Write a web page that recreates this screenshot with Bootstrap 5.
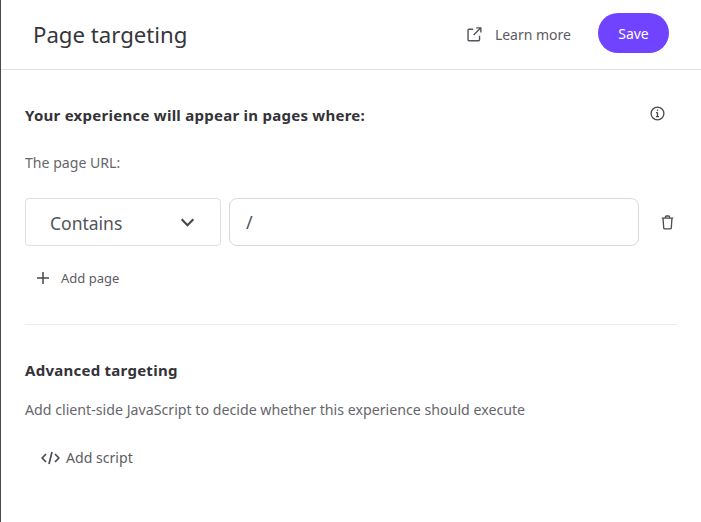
<!doctype html>
<html lang="en">
<head>
<meta charset="utf-8">
<title>Page targeting</title>
<link href="https://cdn.jsdelivr.net/npm/bootstrap@5.3.0/dist/css/bootstrap.min.css" rel="stylesheet">
<style>
html,body{height:100%;overflow:hidden}
body{font-family:"Noto Sans","Open Sans",sans-serif;color:#5a5a60;background:#fff}
.shell{height:522px;border-left:1px solid #4a4a4a}
.top{height:70px;border-bottom:1px solid #e2e2e2;padding:0 32px 0 32px}
.title{font-size:22.2px;color:#36363c;font-weight:400;margin:0;line-height:32px}
.learn{font-size:14px;color:#5c5c62;gap:13px;margin-right:27px;text-decoration:none}
.save{background:#6f43ff;color:#fff;border:0;width:71px;height:40px;border-radius:20px;font-size:14px;padding:0;margin-top:-3px}
.main{padding:0 24px}
.head1{font-size:15px;font-weight:700;color:#333338;line-height:20px;margin:0;letter-spacing:.26px}
.info-row{padding-top:35px;padding-right:12px}
.lbl{font-size:14.1px;color:#66666c;line-height:20px;margin:28px 0 0}
.cond{margin-top:25px;gap:8px}
.chooser{width:196px;height:48px;border:1px solid #e0e0e0;border-radius:4px;padding:1px 25px 0 24px;font-size:17.5px;color:#53535c}
.chooser span{padding-top:1px}
.urlbox{width:410px;height:48px;border:1px solid #d9d9d9;border-radius:8px;padding:1px 16px 0;font-size:18px;color:#53535c}
.bin{margin-left:14px}
.adder{font-size:13px;color:#5c5c62;margin:22px 0 0 12px;line-height:20px}
.rule{border-top:1px solid #ececec;margin:36px 0 0}
.head2{margin-top:35px}
.desc{font-size:14.2px;color:#66666c;line-height:20px;margin:20px 0 0}
.scripter{font-size:14.1px;color:#5c5c62;margin:28px 0 0 16px;line-height:20px;gap:6px}
</style>
</head>
<body>
<div class="shell">
  <header class="top d-flex align-items-center justify-content-between">
    <h1 class="title">Page targeting</h1>
    <div class="d-flex align-items-center">
      <a class="learn d-flex align-items-center" href="#">
        <svg width="15" height="15" viewBox="0 0 17 17" fill="none" stroke="#55555b" stroke-width="1.6"><path d="M7 2.5H2.2a1 1 0 0 0-1 1v11a1 1 0 0 0 1 1h11a1 1 0 0 0 1-1V10"/><path d="M10.5 1h5.2v5.2M15.5 1.2 7.5 9.2"/></svg>
        <span>Learn more</span>
      </a>
      <button class="save" type="button">Save</button>
    </div>
  </header>
  <main class="main">
    <div class="info-row d-flex justify-content-between align-items-center">
      <p class="head1">Your experience will appear in pages where:</p>
      <svg class="mb-1" width="15" height="15" viewBox="0 0 15 15" fill="none" stroke="#47474d" stroke-width="1.3"><circle cx="7.5" cy="7.5" r="6.4"/><path d="M7.5 6.5v4M6 6.6h1.5M6 10.6h3"/><circle cx="7.5" cy="4.2" r=".5" fill="#47474d" stroke-width=".6"/></svg>
    </div>
    <p class="lbl">The page URL:</p>
    <div class="cond d-flex align-items-center">
      <div class="chooser d-flex align-items-center justify-content-between flex-shrink-0">
        <span>Contains</span>
        <svg width="15" height="9" viewBox="0 0 16 10" fill="none" stroke="#45454b" stroke-width="2.3"><path d="M1.5 1.5 8 8l6.5-6.5"/></svg>
      </div>
      <div class="urlbox d-flex align-items-center flex-shrink-0">/</div>
      <svg class="bin flex-shrink-0" width="13" height="15" viewBox="0 0 14 16" fill="none" stroke="#4c4c52" stroke-width="1.4"><path d="M.8 3.2h12.4M2.2 3.2l.7 10.6a1.2 1.2 0 0 0 1.2 1.1h5.8a1.2 1.2 0 0 0 1.2-1.1l.7-10.6M4.8 3V2a1 1 0 0 1 1-1h2.4a1 1 0 0 1 1 1v1"/></svg>
    </div>
    <div class="adder d-flex align-items-center gap-2">
      <svg width="12" height="12" viewBox="0 0 12 12" fill="none" stroke="#48484e" stroke-width="1.5"><path d="M6 0v12M0 6h12"/></svg>
      <span class="ms-1">Add page</span>
    </div>
    <div class="rule"></div>
    <p class="head1 head2">Advanced targeting</p>
    <p class="desc">Add client-side JavaScript to decide whether this experience should execute</p>
    <div class="scripter d-flex align-items-center">
      <svg width="19" height="14" viewBox="0 0 19 14" fill="none" stroke="#4c4c52" stroke-width="1.7"><path d="M5 3 1.2 7 5 11M14 3l3.8 4L14 11M11 1 8 13"/></svg>
      <span>Add script</span>
    </div>
  </main>
</div>
<script src="https://cdn.jsdelivr.net/npm/bootstrap@5.3.0/dist/js/bootstrap.bundle.min.js"></script>
</body>
</html>
